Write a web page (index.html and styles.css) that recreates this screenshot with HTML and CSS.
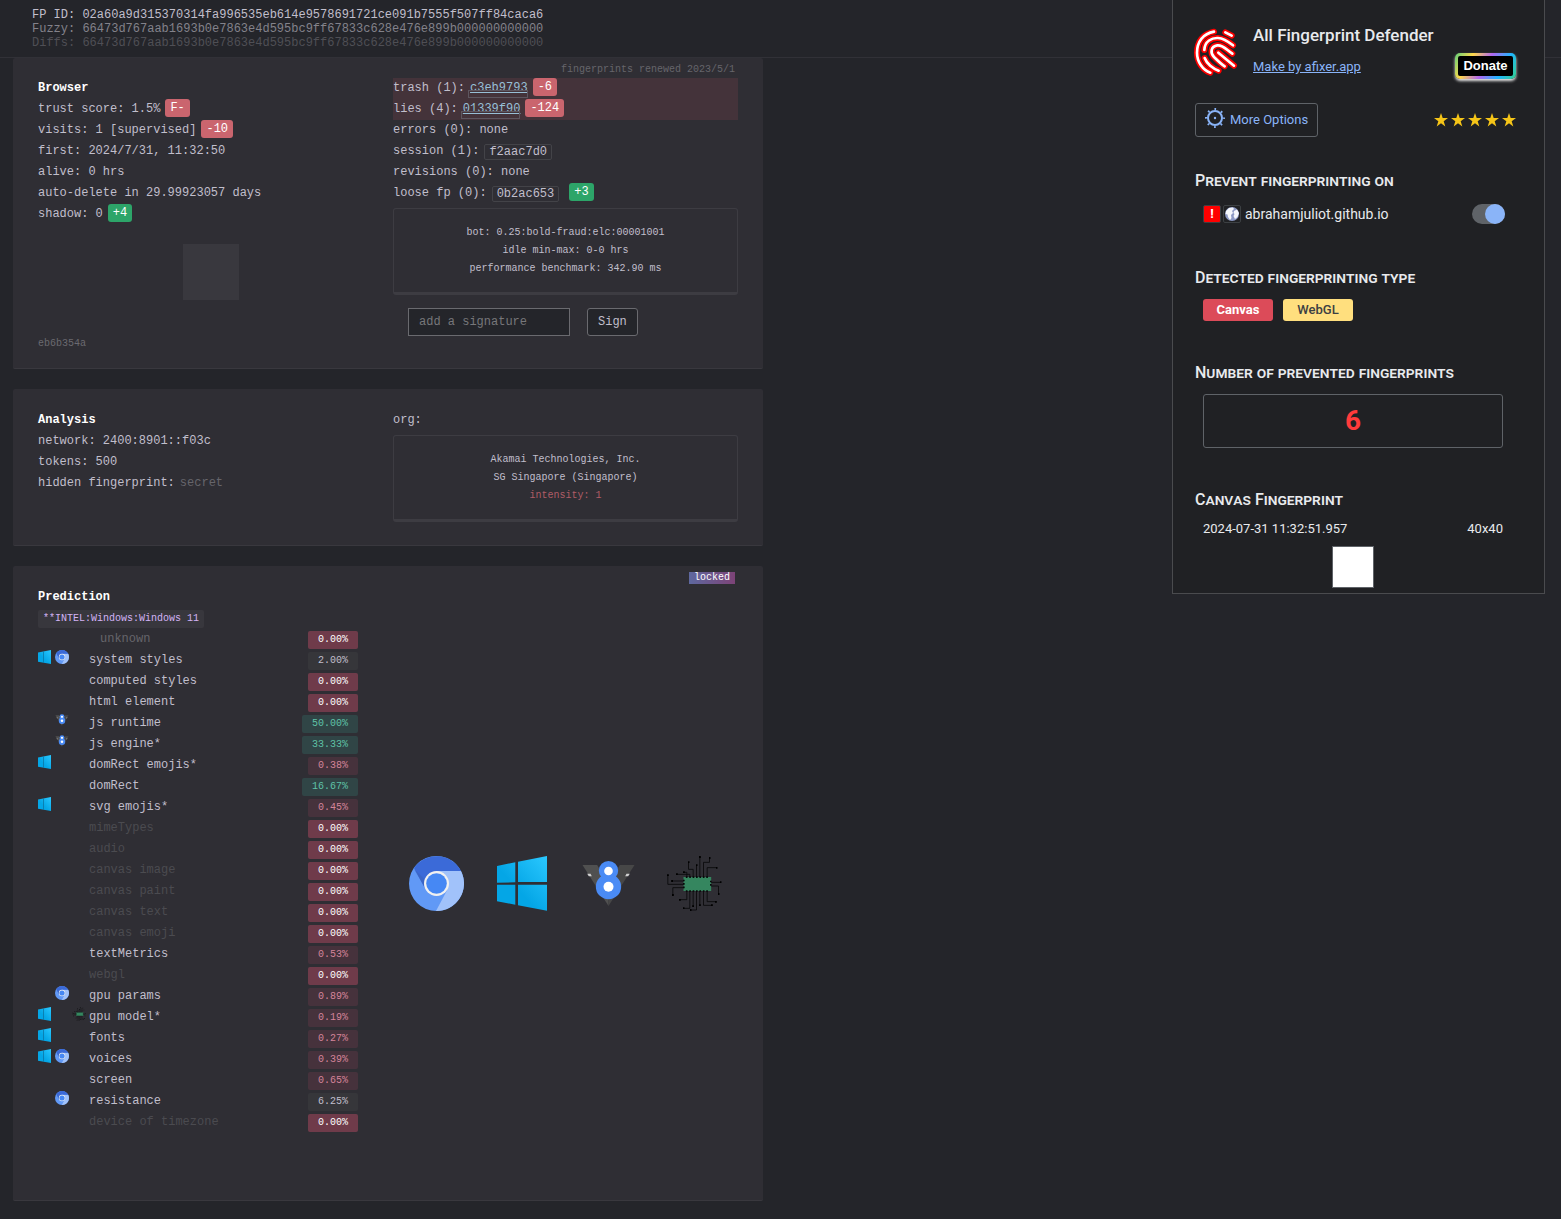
FILE: index.html
```html
<!DOCTYPE html>
<html lang="en">
<head>
<meta charset="utf-8">
<title>Fingerprint report</title>
<link rel="stylesheet" href="styles.css">
</head>
<body>
<svg class="sprite" aria-hidden="true">
  <defs>
    <linearGradient id="win-fill" x1="0" y1="1" x2="1" y2="0">
      <stop offset="0.4" stop-color="#04a6e6"/><stop offset="1" stop-color="#2bc8ff"/>
    </linearGradient>
    <marker id="pad" markerWidth="6" markerHeight="6" refX="3" refY="3" markerUnits="userSpaceOnUse"><path d="M0 0h6v6H0z"/></marker>
    <symbol id="chromium" viewBox="0 0 55 55">
      <circle cx="27.500" cy="27.500" r="27.500" fill="#6199f6"/>
      <path d="M27.500 15H52A27.500 27.500 0 0 1 27 55L38.300 33.700Z" fill="#a1c2fa"/>
      <path d="M5 12A27.500 27.500 0 0 1 52 15H27.500L16.700 33.700Z" fill="#3b6ad8"/>
      <path d="M5 13L16 32L16.500 24Z" fill="#3a62bd" opacity=".6"/>
      <circle cx="27.500" cy="27.500" r="12.500" fill="#f1f1f1"/>
      <circle cx="27.500" cy="27.500" r="10.300" fill="#4688f4"/>
    </symbol>
    <symbol id="windows" viewBox="0 0 50 55" preserveAspectRatio="none">
      <path fill="url(#win-fill)" d="M0 10L18.300 6.300V26.300L0 26.800ZM21 5.700L50 0V26H21ZM0 28.700H18.300V48.700L0 45.300ZM21 28.700H50V54.700L21 49.300Z"/>
    </symbol>
    <symbol id="windows-small" viewBox="0 0 13 14" preserveAspectRatio="none">
      <path fill="url(#win-fill)" d="M0 2.500L13 0V14L0 11.800Z"/>
      <path fill="#0a6f9b" opacity=".7" d="M5 1.500h1v11.300H5z"/>
    </symbol>
    <symbol id="v8" viewBox="17.500 18 165 165">
      <path d="M22 45H66L100 105V168Z" fill="#505050"/>
      <path d="M178 45H134L100 105V168Z" fill="#474747"/>
      <path d="M36 71h10l4 8h-9zM164 71h-10l-4 8h9z" fill="#d0d0d0"/>
      <circle cx="100" cy="62" r="29" fill="#4a8bf5"/>
      <circle cx="100" cy="110" r="38" fill="#4a8bf5"/>
      <circle cx="100" cy="63" r="13" fill="#fff"/>
      <circle cx="100" cy="110" r="15" fill="#fff"/>
    </symbol>
    <symbol id="gpu" viewBox="275.500 18 165 165">
      <rect x="325" y="81" width="83" height="42" fill="#35865f"/>
      <g fill="none" stroke="#08080a" stroke-width="2.500">
        <path marker-end="url(#pad)" d="M374 81V21"/><path marker-end="url(#pad)" d="M385 81V37H403V24"/>
        <path marker-end="url(#pad)" d="M396 81V53H424"/><path marker-end="url(#pad)" d="M364 81V46"/>
        <path marker-end="url(#pad)" d="M354 81V58H340V37"/><path marker-end="url(#pad)" d="M344 81V73H305"/>
        <path marker-end="url(#pad)" d="M335 81V67H326"/><path marker-end="url(#pad)" d="M325 93H291"/>
        <path marker-end="url(#pad)" d="M325 103H278V76"/><path marker-end="url(#pad)" d="M325 113H293V135"/>
        <path marker-end="url(#pad)" d="M408 97H436"/><path marker-end="url(#pad)" d="M408 108H430V132"/>
        <path marker-end="url(#pad)" d="M335 123V149H314"/><path marker-end="url(#pad)" d="M344 123V175H325"/>
        <path marker-end="url(#pad)" d="M354 123V169"/><path marker-end="url(#pad)" d="M364 123V180H346"/>
        <path marker-end="url(#pad)" d="M374 123V166"/><path marker-end="url(#pad)" d="M385 123V166H410"/>
        <path marker-end="url(#pad)" d="M396 123V155H422"/>
        <path stroke-width="5" stroke-dasharray="5 5.200" d="M332 81.500H400M332 123H400M326 89V117M407 92V112"/>
      </g>
    </symbol>
    <symbol id="star" viewBox="0 0 24 24">
      <path fill="#f5c518" d="M12 0l2.900 8.700H24l-7.400 5.500 2.800 8.900-7.400-5.500-7.400 5.500 2.800-8.900L0 8.700h9.100z"/>
    </symbol>
  </defs>
</svg>

<header class="topbar">
  <div>FP ID: 02a60a9d315370314fa996535eb614e9578691721ce091b7555f507ff84caca6</div>
  <div class="fuzzy">Fuzzy: 66473d767aab1693b0e7863e4d595bc9ff67833c628e476e899b000000000000</div>
  <div class="diffs">Diffs: 66473d767aab1693b0e7863e4d595bc9ff67833c628e476e899b000000000000</div>
</header>

<main class="report">
  <section class="card first">
    <span class="note">fingerprints renewed 2023/5/1</span>
    <div class="col">
      <h2>Browser</h2>
      <div class="line">trust score: 1.5% <span class="tag bad">F-</span></div>
      <div class="line">visits: 1 [supervised] <span class="tag bad">-10</span></div>
      <div class="line">first: 2024/7/31, 11:32:50</div>
      <div class="line">alive: 0 hrs</div>
      <div class="line">auto-delete in 29.99923057 days</div>
      <div class="line">shadow: 0 <span class="tag good">+4</span></div>
      <div class="swatch"></div>
      <div class="small-id">eb6b354a</div>
    </div>
    <div class="col">
      <div class="line alert">trash (1): <a class="hash-link" href="#trash">c3eb9793</a> <span class="tag bad">-6</span></div>
      <div class="line alert">lies (4): <a class="hash-link" href="#lies">01339f90</a> <span class="tag bad">-124</span></div>
      <div class="line">errors (0): none</div>
      <div class="line">session (1): <span class="hash">f2aac7d0</span></div>
      <div class="line">revisions (0): none</div>
      <div class="line">loose fp (0): <span class="hash">0b2ac653</span> <span class="tag good spaced">+3</span></div>
      <div class="panel">
        <div>bot: 0.25:bold-fraud:elc:00001001</div>
        <div>idle min-max: 0-0 hrs</div>
        <div>performance benchmark: 342.90 ms</div>
      </div>
      <form class="sign">
        <input type="text" aria-label="Signature" placeholder="add a signature">
        <button type="button">Sign</button>
      </form>
    </div>
  </section>

  <section class="card">
    <div class="col">
      <h2>Analysis</h2>
      <div class="line">network: 2400:8901::f03c</div>
      <div class="line">tokens: 500</div>
      <div class="line">hidden fingerprint: <span class="secret">secret</span></div>
    </div>
    <div class="col">
      <div class="line">org:</div>
      <div class="panel">
        <div>Akamai Technologies, Inc.</div>
        <div>SG Singapore (Singapore)</div>
        <div class="intensity">intensity: 1</div>
      </div>
    </div>
  </section>

  <section class="card prediction">
    <span class="locked">locked</span>
    <div class="col">
      <h2>Prediction</h2>
      <div class="line"><span class="device">**INTEL:Windows:Windows 11</span></div>
      <div class="scores-wrap">
      <table class="scores">
        <tbody>
          <tr class="mute"><td></td><th scope="row" class="indent">unknown</th><td><span class="pct zero">0.00%</span></td></tr>
          <tr><td><span class="icons"><svg class="c1"><use href="#windows-small"/></svg><svg class="c2"><use href="#chromium"/></svg></span></td><th scope="row">system styles</th><td><span class="pct">2.00%</span></td></tr>
          <tr><td></td><th scope="row">computed styles</th><td><span class="pct zero">0.00%</span></td></tr>
          <tr><td></td><th scope="row">html element</th><td><span class="pct zero">0.00%</span></td></tr>
          <tr><td><span class="icons"><svg class="c2"><use href="#v8"/></svg></span></td><th scope="row">js runtime</th><td><span class="pct high">50.00%</span></td></tr>
          <tr><td><span class="icons"><svg class="c2"><use href="#v8"/></svg></span></td><th scope="row">js engine*</th><td><span class="pct high">33.33%</span></td></tr>
          <tr><td><span class="icons"><svg class="c1"><use href="#windows-small"/></svg></span></td><th scope="row">domRect emojis*</th><td><span class="pct low">0.38%</span></td></tr>
          <tr><td></td><th scope="row">domRect</th><td><span class="pct high">16.67%</span></td></tr>
          <tr><td><span class="icons"><svg class="c1"><use href="#windows-small"/></svg></span></td><th scope="row">svg emojis*</th><td><span class="pct low">0.45%</span></td></tr>
          <tr class="off"><td></td><th scope="row">mimeTypes</th><td><span class="pct zero">0.00%</span></td></tr>
          <tr class="off"><td></td><th scope="row">audio</th><td><span class="pct zero">0.00%</span></td></tr>
          <tr class="off"><td></td><th scope="row">canvas image</th><td><span class="pct zero">0.00%</span></td></tr>
          <tr class="off"><td></td><th scope="row">canvas paint</th><td><span class="pct zero">0.00%</span></td></tr>
          <tr class="off"><td></td><th scope="row">canvas text</th><td><span class="pct zero">0.00%</span></td></tr>
          <tr class="off"><td></td><th scope="row">canvas emoji</th><td><span class="pct zero">0.00%</span></td></tr>
          <tr><td></td><th scope="row">textMetrics</th><td><span class="pct low">0.53%</span></td></tr>
          <tr class="off"><td></td><th scope="row">webgl</th><td><span class="pct zero">0.00%</span></td></tr>
          <tr><td><span class="icons"><svg class="c2"><use href="#chromium"/></svg></span></td><th scope="row">gpu params</th><td><span class="pct low">0.89%</span></td></tr>
          <tr><td><span class="icons"><svg class="c1"><use href="#windows-small"/></svg><svg class="c3"><use href="#gpu"/></svg></span></td><th scope="row">gpu model*</th><td><span class="pct low">0.19%</span></td></tr>
          <tr><td><span class="icons"><svg class="c1"><use href="#windows-small"/></svg></span></td><th scope="row">fonts</th><td><span class="pct low">0.27%</span></td></tr>
          <tr><td><span class="icons"><svg class="c1"><use href="#windows-small"/></svg><svg class="c2"><use href="#chromium"/></svg></span></td><th scope="row">voices</th><td><span class="pct low">0.39%</span></td></tr>
          <tr><td></td><th scope="row">screen</th><td><span class="pct low">0.65%</span></td></tr>
          <tr><td><span class="icons"><svg class="c2"><use href="#chromium"/></svg></span></td><th scope="row">resistance</th><td><span class="pct">6.25%</span></td></tr>
          <tr class="off"><td></td><th scope="row">device of timezone</th><td><span class="pct zero">0.00%</span></td></tr>
        </tbody>
      </table>
      </div>
    </div>
    <div class="col logos">
      <svg><use href="#chromium"/></svg>
      <svg class="win"><use href="#windows"/></svg>
      <svg><use href="#v8"/></svg>
      <svg><use href="#gpu"/></svg>
    </div>
  </section>
</main>

<aside class="popup">
  <div class="head">
    <svg class="logo" viewBox="15 20 138 150" fill="none" stroke-linecap="round">
      <g stroke="#f00" stroke-width="18">
        <path d="M78 34C45 40 27 65 27 97C27 125 45 150 67 157"/>
        <path d="M112 36L131 46"/>
        <path d="M49 89C50 62 72 52 90 53C108 54 120 63 135 75"/>
        <path d="M50 113C56 130 75 145 92 151"/>
        <path d="M133 100C115 88 105 73 88 75C68 78 66 98 78 110C88 120 98 130 110 138"/>
        <path d="M91 97L138 136"/>
      </g>
      <g stroke="#fff" stroke-width="8">
        <path d="M78 34C45 40 27 65 27 97C27 125 45 150 67 157"/>
        <path d="M112 36L131 46"/>
        <path d="M49 89C50 62 72 52 90 53C108 54 120 63 135 75"/>
        <path d="M50 113C56 130 75 145 92 151"/>
        <path d="M133 100C115 88 105 73 88 75C68 78 66 98 78 110C88 120 98 130 110 138"/>
        <path d="M91 97L138 136"/>
      </g>
    </svg>
    <div class="titles">
      <h1>All Fingerprint Defender</h1>
      <a href="#author">Make by afixer.app</a>
    </div>
    <button type="button" class="donate">Donate</button>
  </div>
  <div class="actions">
    <button type="button" class="options">
      <svg viewBox="0 0 20 20" fill="none" stroke="#8ab4f8">
        <circle cx="10" cy="10" r="7" stroke-width="2"/>
        <circle cx="10" cy="10" r="9" stroke-width="2" stroke-dasharray="1.700 5.369" stroke-dashoffset=".850"/>
        <circle cx="10" cy="10" r="1.200" fill="#8ab4f8" stroke="none"/>
      </svg>
      More Options
    </button>
    <div class="stars" role="img" aria-label="5 stars">
      <svg><use href="#star"/></svg><svg><use href="#star"/></svg><svg><use href="#star"/></svg><svg><use href="#star"/></svg><svg><use href="#star"/></svg>
    </div>
  </div>
  <div class="sections">
    <section>
      <h3>Prevent fingerprinting on</h3>
      <div class="body site">
        <span class="warn">!</span>
        <span class="globe"><svg viewBox="0 0 16 16"><circle cx="8" cy="8" r="7" fill="#8c98c4"/><path fill="#f4f6fb" d="M2 5L5 2L9 1.500L10 3L8 5L9 7L7 9L7.500 12L6 14L4 11L3.500 8.500L1.500 8ZM10 5L13 3.500L15 7L13.500 11L11 13L9.500 10L10.500 8L9.500 7Z"/></svg></span>
        <label for="site-on">abrahamjuliot.github.io</label>
        <input type="checkbox" id="site-on" checked>
      </div>
    </section>
    <section>
      <h3>Detected fingerprinting type</h3>
      <div class="body types"><span class="canvas">Canvas</span><span class="webgl">WebGL</span></div>
    </section>
    <section>
      <h3>Number of prevented fingerprints</h3>
      <div class="body"><div class="count">6</div></div>
    </section>
    <section>
      <h3>Canvas Fingerprint</h3>
      <div class="body">
        <div class="entry"><span>2024-07-31 11:32:51.957</span><span>40x40</span></div>
        <div class="preview"></div>
      </div>
    </section>
  </div>
</aside>
</body>
</html>
```
FILE: styles.css
```css
* { box-sizing: border-box; }

body {
  margin: 0;
  background: #24252a;
  color: #c1bfcc;
  font: 12px/21px "Liberation Mono", monospace;
}

.sprite { position: absolute; width: 0; height: 0; }

h1, h2, h3 { margin: 0; }

.topbar {
  padding: 8px 32px 7px;
  border-bottom: 1px solid #313137;
  line-height: 14px;
  white-space: nowrap;
}
.fuzzy { color: #83828a; }
.diffs { color: #4f4f55; }

/* report */
.report {
  max-width: 763px;
  padding: 0 0 18px 13px;
  display: flex;
  flex-direction: column;
  gap: 20px;
}
.card {
  position: relative;
  display: grid;
  grid-template-columns: 1fr 1fr;
  gap: 10px;
  padding: 21px 25px 23px;
  background: #2f2e34;
  border-bottom: 1px solid #39383e;
  border-radius: 2px;
}
.card.first { padding-top: 20px; padding-bottom: 15px; }
.card.prediction { padding-bottom: 20px; }

h2 { font-size: 12px; line-height: 21px; color: #fff; }
.line { display: flex; align-items: center; gap: 5px; height: 21px; white-space: nowrap; }
.alert { background: #44333a; }

.tag {
  align-self: flex-start;
  padding: 0 5px;
  border-radius: 3px;
  line-height: 18px;
  color: #fff;
}
.bad { background: #ca656e; }
.good { background: #2da569; }
.spaced { margin-left: 5px; }

.hash {
  padding: 0 4px;
  border: 1px solid #434348;
  border-radius: 2px;
  line-height: 14px;
}
.hash-link { position: relative; color: #97bfd6; }
.hash-link::after {
  content: "";
  position: absolute;
  inset: auto 0 1px -2px;
  height: 6px;
  border: 1px solid #5d565f;
}

.note {
  position: absolute;
  top: 1px;
  right: 28px;
  font-size: 10px;
  color: #66656b;
}
.swatch { width: 56px; height: 56px; margin: 19px auto 35px; background: #39383e; }
.small-id { font-size: 10px; line-height: 18px; color: #6b6a70; }

.panel {
  margin-top: 4px;
  padding: 15px 14px 14px;
  border: 1px solid #3d3c42;
  border-bottom-width: 3px;
  border-radius: 3px;
  font-size: 10px;
  line-height: 18px;
  text-align: center;
}
.intensity { color: #b05c66; }

.sign { display: flex; gap: 17px; margin: 13px 0 0 15px; }
.sign input, .sign button {
  height: 28px;
  padding: 0 10px;
  border: 1px solid #6a6a6f;
  background: #24252a;
  color: inherit;
  font: inherit;
}
.sign input { width: 162px; }
.sign input::placeholder { color: #77777a; opacity: 1; }
.sign button { border-radius: 3px; }

.secret { color: #66656b; }

.locked {
  position: absolute;
  top: 6px;
  right: 28px;
  padding: 0 5px;
  background: linear-gradient(90deg, #5e689f, #7d4377);
  color: #fff;
  font-size: 10px;
  line-height: 12px;
}
.device {
  padding: 0 5px;
  background: #38373d;
  border-radius: 2px;
  color: #d3b3f5;
  font-size: 10px;
  line-height: 18px;
}

.scores-wrap { padding: 0 25px 47px 0; }
.scores { width: 100%; border-collapse: collapse; }
.scores tr { height: 21px; }
.scores td, .scores th { padding: 0; text-align: left; vertical-align: top; }
.scores th { font-weight: 400; line-height: 21px; }
.scores td:first-child { width: 51px; }
.scores td:last-child { padding-top: 2px; text-align: right; line-height: 0; }
.scores th.indent { padding-left: 11px; }
.mute th { color: #66656b; }
.off th { color: #4b4b50; }

.icons { display: grid; grid-template-columns: 14px 14px 14px; column-gap: 3px; height: 14px; }
.icons svg { width: 14px; height: 14px; grid-row: 1; }
.icons .c1 { width: 13px; }
.icons .c2 { grid-column: 2; }
.icons .c3 { grid-column: 3; }

.pct {
  display: inline-block;
  padding: 0 10px;
  border-radius: 2px;
  background: #36363a;
  font-size: 10px;
  line-height: 18px;
}
.zero { background: #6f3b4a; color: #fff; }
.low { background: #46323c; color: #d5849a; }
.high { background: #304546; color: #5fc2a6; }

.logos {
  display: grid;
  grid-template-columns: repeat(4, 1fr);
  place-items: center;
}
.logos svg { width: 55px; height: 55px; }
.logos .win { width: 50px; }

/* extension popup, floating over the page */
.popup {
  position: absolute;
  top: 0;
  right: 16px;
  width: 373px;
  padding: 24px 28px 5px 22px;
  background: #202124;
  border: 1px solid #4a4b4e;
  border-top: 0;
  color: #e8eaed;
  font: 13px/18px Roboto, sans-serif;
}
.head { display: flex; height: 55px; }
.logo { width: 46px; height: 50px; margin: 3px 14px 0 -2px; flex: none; }
.titles { flex: 1; display: flex; flex-direction: column; align-items: flex-start; gap: 12px; white-space: nowrap; }
h1 { font-size: 17px; font-weight: 500; line-height: 22px; }
.titles a { color: #8ab4f8; }
.donate {
  align-self: flex-end;
  flex: none;
  width: 61px;
  height: 26px;
  padding: 0;
  border: 3px solid transparent;
  border-radius: 5px;
  background: linear-gradient(#000, #000) padding-box,
    linear-gradient(120deg, #5fd07a, #ffd84a 25%, #b066f0 50%, #1fb6ff 75%, #35d08a) border-box;
  box-shadow: 0 2px 3px #e8e8e8;
  color: #fff;
  font: bold 13px/18px "Liberation Sans", sans-serif;
}
.actions { display: flex; justify-content: space-between; align-items: center; margin: 24px 0 34px; }
.options {
  display: flex;
  align-items: center;
  gap: 5px;
  height: 34px;
  padding: 0 9px;
  border: 1px solid #5f6368;
  border-radius: 3px;
  background: none;
  color: #8ab4f8;
  font: inherit;
}
.options svg { width: 20px; height: 20px; margin-bottom: 4px; }
.stars { display: flex; gap: 3px; }
.stars svg { width: 14px; height: 14px; }

.sections { display: flex; flex-direction: column; gap: 42px; }
h3 { margin-bottom: 11px; font-size: 16px; font-weight: 500; line-height: 20px; font-variant: small-caps; }
.body { padding: 0 13px 0 8px; }

.site { display: flex; align-items: center; gap: 2px; height: 24px; padding-right: 11px; }
.warn, .globe { width: 18px; height: 18px; border: 1px solid #3c4043; border-radius: 2px; }
.warn { background: #f00; color: #fff; font-weight: 700; line-height: 16px; text-align: center; }
.globe svg { display: block; }
.site label { flex: 1; margin-left: 2px; font-size: 14px; }
.site input {
  appearance: none;
  display: flex;
  justify-content: flex-end;
  width: 33px;
  height: 20px;
  margin: 0;
  border-radius: 10px;
  background: #5f6368;
}
.site input::before { content: ""; width: 20px; border-radius: 50%; background: #8ab4f8; }

.types { display: flex; gap: 10px; }
.types span { width: 70px; border-radius: 3px; line-height: 22px; text-align: center; }
.canvas { background: #dc4b59; color: #fff; font-weight: 700; }
.webgl { background: #ffdf7e; color: #3c4043; font-weight: 500; }

.count {
  border: 1px solid #5f6368;
  border-radius: 3px;
  color: #ff3b3b;
  font-size: 28px;
  font-weight: 700;
  line-height: 52px;
  text-align: center;
}
.entry { display: flex; justify-content: space-between; line-height: 16px; }
.preview { width: 42px; height: 42px; margin: 9px auto 0; background: #fff; border: 1px solid #5f6368; }
```
